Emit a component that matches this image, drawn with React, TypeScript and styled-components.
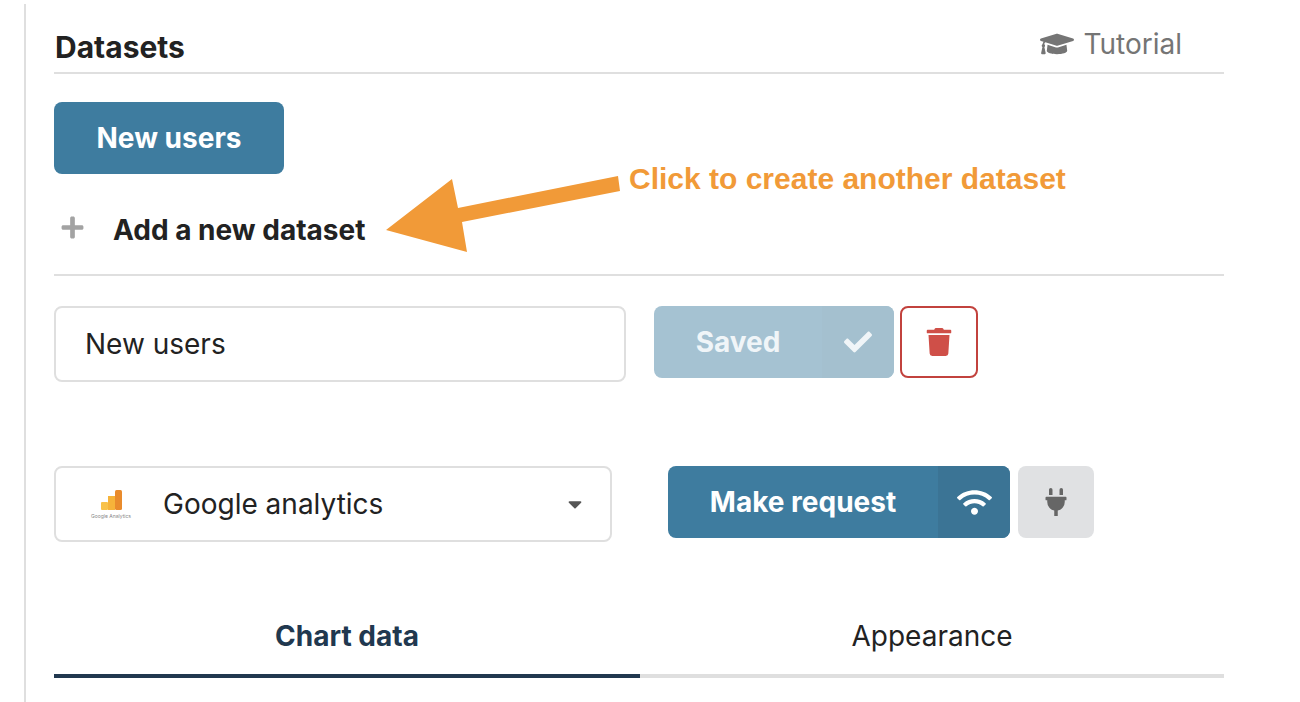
import React from 'react';
import styled, { createGlobalStyle } from 'styled-components';
import { FaCaretDown, FaCheck, FaGraduationCap, FaPlug, FaPlus, FaTrash, FaWifi } from 'react-icons/fa';

const GlobalStyle = createGlobalStyle`
  html, body {
    margin: 0;
    padding: 0;
    background: #fff;
    height: 702px;
    overflow: hidden;
  }
  body {
    font-family: Inter, "Liberation Sans", sans-serif;
    color: #222;
  }
`;

const Page = styled.div`
  position: relative;
  height: 698px;
  margin: 4px 0 0 24px;
  width: 1170px;
  padding-left: 28px;
  border-left: 2px solid #dfdfdf;
`;

const Header = styled.div`
  display: flex;
  justify-content: space-between;
  align-items: center;
  height: 70px;
  padding: 0 42px 0 1px;
  border-bottom: 2px solid #dfdfdf;
  box-sizing: border-box;
`;

const Title = styled.h2`
  margin: 18px 0 0;
  font-size: 30px;
  font-weight: 700;
  color: #222;
`;

const Tutorial = styled.div`
  display: flex;
  align-items: center;
  gap: 9px;
  margin-top: 12px;
  font-size: 28px;
  color: #757575;
  svg {
    font-size: 34px;
  }
`;

const DatasetButton = styled.button`
  display: block;
  width: 230px;
  height: 72px;
  margin-top: 28px;
  border: 0;
  border-radius: 8px;
  background: #3e7c9f;
  color: #fff;
  font: 700 28px Inter, sans-serif;
`;

const AddRow = styled.div`
  display: flex;
  align-items: center;
  height: 102px;
  padding: 12px 0 0 6px;
  box-sizing: border-box;
  border-bottom: 2px solid #dfdfdf;
  font-size: 28px;
  font-weight: 700;
  color: #222;
  svg {
    margin: -6px 28px 0 0;
    font-size: 25px;
    color: #a3a3a3;
  }
`;

const Row = styled.div<{ $top: number }>`
  display: flex;
  align-items: flex-start;
  margin-top: ${props => props.$top}px;
`;

const NameInput = styled.div`
  display: flex;
  align-items: center;
  width: 572px;
  height: 76px;
  padding-left: 29px;
  box-sizing: border-box;
  border: 2px solid #dfdfdf;
  border-radius: 8px;
  font-size: 28px;
  color: #222;
`;

const SplitButton = styled.div<{ $width: number; $muted?: boolean; $left: number }>`
  display: flex;
  width: ${props => props.$width}px;
  height: 72px;
  margin-left: ${props => props.$left}px;
  border-radius: 8px;
  overflow: hidden;
  color: ${props => (props.$muted ? '#f0f5f8' : '#fff')};
  background: ${props => (props.$muted ? '#a5c2d2' : '#3e7c9f')};
  font-size: 28px;
  font-weight: 700;
`;

const SplitLabel = styled.span`
  flex: 1;
  display: flex;
  align-items: center;
  justify-content: center;
`;

const SplitIcon = styled.span<{ $muted?: boolean; $size: number }>`
  display: flex;
  align-items: center;
  justify-content: center;
  width: 72px;
  background: ${props => (props.$muted ? '#a4c0cf' : '#3b7495')};
  svg {
    font-size: ${props => props.$size}px;
  }
`;

const DeleteButton = styled.div`
  display: flex;
  align-items: center;
  justify-content: center;
  width: 78px;
  height: 72px;
  margin-left: 6px;
  box-sizing: border-box;
  border: 2px solid #c2423d;
  border-radius: 8px;
  color: #cf4f48;
  svg {
    font-size: 28px;
  }
`;

const Select = styled.div`
  display: flex;
  align-items: center;
  width: 558px;
  height: 76px;
  box-sizing: border-box;
  border: 2px solid #dfdfdf;
  border-radius: 8px;
  padding: 0 24px 0 34px;
  font-size: 28px;
  color: #222;
`;

const LogoWrap = styled.span`
  display: flex;
  flex-direction: column;
  align-items: center;
  gap: 3px;
  width: 42px;
  margin-right: 31px;
`;

const LogoCaption = styled.span`
  font-size: 5px;
  line-height: 6px;
  white-space: nowrap;
  color: #888;
`;

const SelectLabel = styled.span`
  flex: 1;
`;

const Caret = styled(FaCaretDown)`
  font-size: 22px;
  color: #555;
`;

const PlugButton = styled.div`
  display: flex;
  align-items: center;
  justify-content: center;
  width: 76px;
  height: 72px;
  margin-left: 8px;
  border-radius: 8px;
  background: #e0e1e3;
  color: #666;
  svg {
    font-size: 28px;
  }
`;

const Tabs = styled.div`
  display: flex;
  margin-top: 58px;
  width: 1170px;
`;

const Tab = styled.div<{ $active?: boolean }>`
  display: flex;
  align-items: center;
  justify-content: center;
  width: ${props => (props.$active ? 586 : 584)}px;
  height: 78px;
  padding-bottom: 2px;
  box-sizing: border-box;
  border-bottom: 4px solid ${props => (props.$active ? '#21384f' : '#dfdfdf')};
  font-size: 28px;
  font-weight: ${props => (props.$active ? 700 : 400)};
  color: ${props => (props.$active ? '#21384f' : '#222')};
`;

const ArrowSvg = styled.svg`
  position: absolute;
  left: 334px;
  top: 171px;
`;

const Callout = styled.div`
  position: absolute;
  left: 603px;
  top: 158px;
  font: 700 30px "Liberation Sans", Arial, sans-serif;
  color: #f19a38;
  white-space: nowrap;
`;

const AnalyticsLogo = () => (
  <svg width="21" height="20" viewBox="0 0 21 20">
    <rect x="0" y="12" width="7" height="8" rx="1" fill="#f8c24a" />
    <rect x="7" y="6" width="7" height="14" fill="#f6b33a" />
    <rect x="14" y="0" width="7" height="20" rx="1.5" fill="#e98b2c" />
  </svg>
);

export default function App() {
  return (
    <>
      <GlobalStyle />
      <Page>
        <Header>
          <Title>Datasets</Title>
          <Tutorial>
            <FaGraduationCap />
            Tutorial
          </Tutorial>
        </Header>

        <DatasetButton>New users</DatasetButton>

        <AddRow>
          <FaPlus />
          Add a new dataset
        </AddRow>

        <Row $top={30}>
          <NameInput>New users</NameInput>
          <SplitButton $width={240} $left={28} $muted>
            <SplitLabel>Saved</SplitLabel>
            <SplitIcon $muted $size={28}>
              <FaCheck />
            </SplitIcon>
          </SplitButton>
          <DeleteButton>
            <FaTrash />
          </DeleteButton>
        </Row>

        <Row $top={84}>
          <Select>
            <LogoWrap>
              <AnalyticsLogo />
              <LogoCaption>Google Analytics</LogoCaption>
            </LogoWrap>
            <SelectLabel>Google analytics</SelectLabel>
            <Caret />
          </Select>
          <SplitButton $width={342} $left={56}>
            <SplitLabel>Make request</SplitLabel>
            <SplitIcon $size={35}>
              <FaWifi />
            </SplitIcon>
          </SplitButton>
          <PlugButton>
            <FaPlug />
          </PlugButton>
        </Row>

        <Tabs>
          <Tab $active>Chart data</Tab>
          <Tab>Appearance</Tab>
        </Tabs>

        <ArrowSvg width="270" height="90" viewBox="0 0 270 90">
          <polygon
            points="26,55 92,4 98,33 258,1 260,16 102,47 107,77"
            fill="#f19a38"
          />
        </ArrowSvg>
        <Callout>Click to create another dataset</Callout>
      </Page>
    </>
  );
}
